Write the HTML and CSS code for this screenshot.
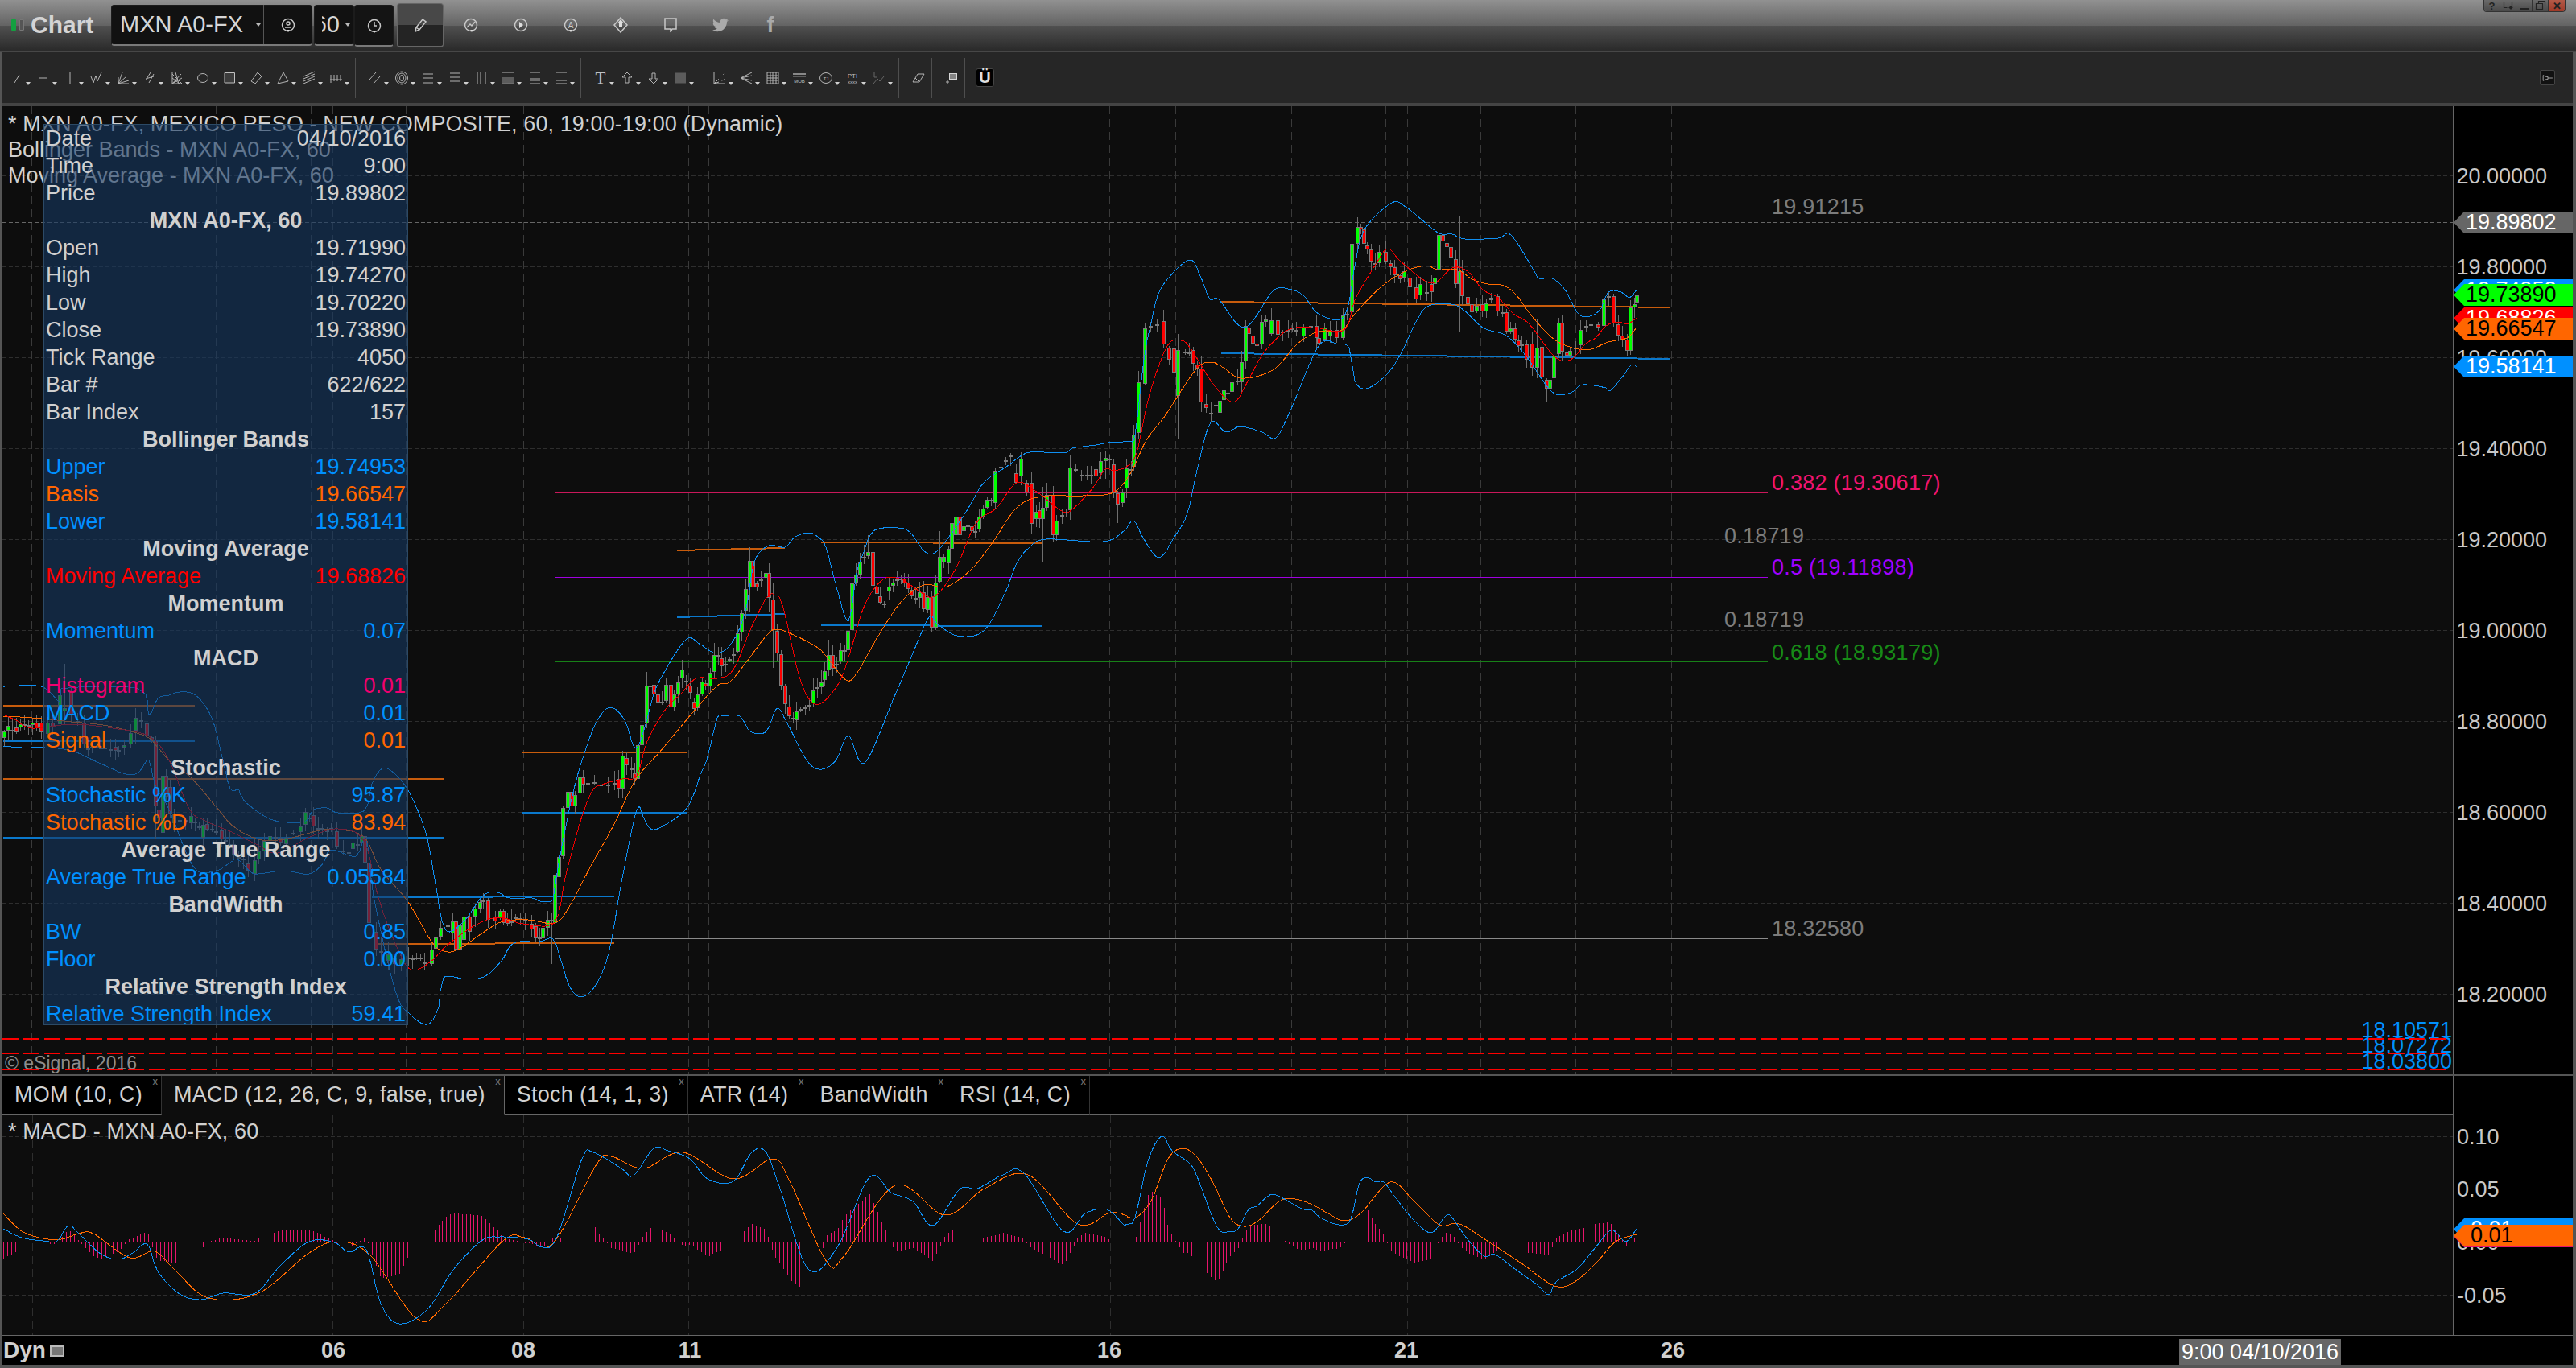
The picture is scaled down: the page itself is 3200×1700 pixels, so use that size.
FILE: index.html
```html
<!DOCTYPE html>
<html lang="en">
<head>
<meta charset="utf-8">
<title>Chart - MXN A0-FX</title>
<link rel="stylesheet" href="styles.css">
</head>
<body>
<div class="app">
  <header class="titlebar">
    <div class="logo"><i class="logo-on"></i><i class="logo-off"></i></div>
    <div class="app-title">Chart</div>
    <div class="box box-symbol">
      <span class="symbol-text">MXN A0-FX</span><i class="caret caret-box"></i>
      <span class="box-icon">
        <svg class="tb-ic" viewBox="0 0 20 20"><circle cx="10" cy="10" r="7.5"/><circle cx="10" cy="8" r="2"/><path d="M6 13h8" /><path class="w" d="M8 16h4l-2 3z"/></svg>
      </span>
    </div>
    <div class="box box-interval"><span class="interval-value">60</span><i class="caret caret-box"></i></div>
    <div class="box box-clock">
      <svg class="tb-ic" viewBox="0 0 20 20"><circle cx="10" cy="10" r="7.5"/><path d="M10 5v5h3"/><path class="w" d="M8 16h4l-2 3z"/></svg>
    </div>
    <div class="box box-pencil">
      <svg class="tb-ic" viewBox="0 0 20 20"><path d="M4 18l1-5L13 3l4 3-8 10z"/><path d="M5 13l4 3"/></svg>
    </div>
    <div class="tb-icons">
      <div class="tb-cell"><svg class="tb-ic" viewBox="0 0 20 20"><circle cx="10" cy="10" r="7.5"/><path d="M5 13l4-4 2 2 4-5"/><path class="w" d="M9 16h4l-2 3z"/></svg></div>
      <div class="tb-cell"><svg class="tb-ic" viewBox="0 0 20 20"><circle cx="10" cy="10" r="7.5"/><path class="w" d="M8 6l5 4-5 4z"/></svg></div>
      <div class="tb-cell"><svg class="tb-ic" viewBox="0 0 20 20"><circle cx="10" cy="10" r="7.5"/><text class="tb-a" x="10" y="14">A</text><path class="w" d="M8 16h4l-2 3z"/></svg></div>
      <div class="tb-cell"><svg class="tb-ic" viewBox="0 0 20 20"><path d="M10 1l8 9-8 9-8-9z"/><path class="w" d="M10 3l4 5h-2v5H8V8H6z"/></svg></div>
      <div class="tb-cell"><svg class="tb-ic" viewBox="0 0 20 20"><path d="M3 2h14v13h-5l-2 4v-4H3z"/></svg></div>
      <div class="tb-cell"><svg class="tb-bird" viewBox="0 0 24 24"><path d="M23.95 4.57a10 10 0 0 1-2.83.8 4.96 4.96 0 0 0 2.16-2.72c-.95.55-2 .95-3.12 1.18a4.92 4.92 0 0 0-8.38 4.48C7.69 8.1 4.07 6.13 1.64 3.16a4.82 4.82 0 0 0-.67 2.48c0 1.71.87 3.21 2.19 4.1a4.9 4.9 0 0 1-2.23-.62v.06a4.93 4.93 0 0 0 3.95 4.83 4.9 4.9 0 0 1-2.21.08 4.94 4.94 0 0 0 4.6 3.42A9.87 9.87 0 0 1 0 19.54a13.9 13.9 0 0 0 7.55 2.21c9.05 0 14-7.5 14-13.98l-.01-.64a10 10 0 0 0 2.41-2.55z"/></svg></div>
      <div class="tb-cell"><span class="tb-f">f</span></div>
    </div>
    <div class="winbtns">
      <span class="winbtn">?</span>
      <span class="winbtn"><svg class="win-ic" viewBox="0 0 14 12"><path d="M1.5 1.5h10v6h-3"/><path d="M1.5 1.5v7h4"/><path class="w" d="M7 8h6l-3 3z"/></svg></span>
      <span class="winbtn"><svg class="win-ic" viewBox="0 0 14 12"><path class="w" d="M2 9h10v2H2z"/></svg></span>
      <span class="winbtn"><svg class="win-ic" viewBox="0 0 14 12"><path d="M4.5 3V.5h8v6H10"/><path d="M1.5 3.5h8v7h-8z"/></svg></span>
      <span class="winbtn winbtn-close">✕</span>
    </div>
  </header>

  <nav class="toolbar">
    <div class="tool"><svg class="ic" viewBox="0 0 16 16"><path d="M5 14l6-10"/></svg><i class="caret"></i></div>
    <div class="tool"><svg class="ic" viewBox="0 0 16 16"><path d="M2 8h11"/></svg><i class="caret"></i></div>
    <div class="tool"><svg class="ic" viewBox="0 0 16 16"><path d="M8 1v14"/></svg><i class="caret"></i></div>
    <div class="tool"><svg class="ic" viewBox="0 0 16 16"><path d="M1 6l3 8 3-9 2 7 5-11"/></svg><i class="caret"></i></div>
    <div class="tool"><svg class="ic" viewBox="0 0 16 16"><path d="M2 15h13M2 15V7M2 15L7 1M2 15L12 6M2 15l13-4"/></svg><i class="caret"></i></div>
    <div class="tool"><svg class="ic" viewBox="0 0 16 16"><path d="M9 1L3 11M13 3L7 14M3 9l10-3"/></svg><i class="caret"></i></div>
    <div class="tool"><svg class="ic" viewBox="0 0 16 16"><path d="M3 1v14h12M3 15L14 3M3 15L15 8M3 3l12 12M3 8l9 7M7 1l4 14"/></svg><i class="caret"></i></div>
    <div class="tool"><svg class="ic" viewBox="0 0 16 16"><ellipse cx="8" cy="8" rx="6.5" ry="5.5"/></svg><i class="caret"></i></div>
    <div class="tool"><svg class="ic" viewBox="0 0 16 16"><path class="grad" d="M2 1.5h12.5V14H2z"/></svg><i class="caret"></i></div>
    <div class="tool"><svg class="ic" viewBox="0 0 16 16"><path d="M2 12L10 1l5 5-8 9z"/></svg><i class="caret"></i></div>
    <div class="tool"><svg class="ic" viewBox="0 0 16 16"><path d="M9 1L2 15l13-3z"/></svg><i class="caret"></i></div>
    <div class="tool"><svg class="ic" viewBox="0 0 16 16"><path d="M1 6l14-6M1 9l14-6M1 12l14-6M1 15l14-6"/></svg><i class="caret"></i></div>
    <div class="tool"><svg class="ic" viewBox="0 0 16 16"><path d="M1 10h15M2 4v10M6 4v8M10 4v8M14 4v8"/></svg><i class="caret"></i></div>
    <i class="sep"></i>
    <div class="tool"><svg class="ic" viewBox="0 0 16 16"><path d="M1 10L9 1M6 15l8-9"/></svg><i class="caret"></i></div>
    <div class="tool"><svg class="ic" viewBox="0 0 16 16"><ellipse cx="8" cy="8" rx="7.5" ry="8"/><ellipse cx="8" cy="8" rx="5" ry="6"/><ellipse cx="8" cy="8" rx="2.5" ry="3.5"/></svg><i class="caret"></i></div>
    <div class="tool"><svg class="ic" viewBox="0 0 16 16"><path d="M2 3h12M2 8h12M2 14h12"/></svg><i class="caret"></i></div>
    <div class="tool"><svg class="ic" viewBox="0 0 16 16"><path d="M2 2h12M2 7h12M2 12h12"/></svg><i class="caret"></i></div>
    <div class="tool"><svg class="ic" viewBox="0 0 16 16"><path d="M3 1v14M7 1v14M13 1v14"/></svg><i class="caret"></i></div>
    <div class="tool"><svg class="ic" viewBox="0 0 16 16"><path d="M1 1h14M1 14h14"/><path class="fill" d="M1 7h14v7H1z"/></svg><i class="caret"></i></div>
    <div class="tool"><svg class="ic" viewBox="0 0 16 16"><path d="M2 1h13M2 9h13M2 11h13M2 15h13"/></svg><i class="caret"></i></div>
    <div class="tool"><svg class="ic" viewBox="0 0 16 16"><path d="M2 1h13M2 11h13M2 15h13"/></svg><i class="caret"></i></div>
    <i class="sep"></i>
    <div class="tool"><span class="ic ic-t">T</span><i class="caret"></i></div>
    <div class="tool"><svg class="ic" viewBox="0 0 16 16"><path d="M8 1L2 7h4v7h4V7h4z"/></svg><i class="caret"></i></div>
    <div class="tool"><svg class="ic" viewBox="0 0 16 16"><path d="M8 15L2 9h4V2h4v7h4z"/></svg><i class="caret"></i></div>
    <div class="tool"><svg class="ic" viewBox="0 0 16 16"><path class="fill" d="M1 1.5h14v13H1z"/></svg><i class="caret"></i></div>
    <i class="sep"></i>
    <div class="tool"><svg class="ic" viewBox="0 0 16 16"><path d="M1 1v14h14M1 15l5-5M1 15l6-2"/><path class="dots" d="M6 10l8-8M8 13l7-4"/></svg><i class="caret"></i></div>
    <div class="tool"><svg class="ic" viewBox="0 0 16 16"><path d="M15 1L1 8l14 7M1 8l14-3M1 8l14 3"/></svg><i class="caret"></i></div>
    <div class="tool"><svg class="ic" viewBox="0 0 16 16"><path d="M1 1h14v14H1zM1 5h14M1 8h14M1 11h14M5 1v14M8 1v14M12 1v14"/></svg><i class="caret"></i></div>
    <div class="tool"><svg class="ic" viewBox="0 0 16 16"><path class="thick" d="M0 3h16"/><path class="fill" d="M0 5h16v2H0z"/><text class="ic-text" x="8" y="14">MOB</text></svg><i class="caret"></i></div>
    <div class="tool"><svg class="ic" viewBox="0 0 16 16"><ellipse cx="8" cy="8" rx="7.5" ry="6.5"/><text class="ic-text" x="8" y="11">TJ</text></svg><i class="caret"></i></div>
    <div class="tool"><svg class="ic" viewBox="0 0 16 16"><text class="ic-text ic-pti" x="8" y="8">PTI</text><text class="ic-text" x="8" y="15">xxxx</text></svg><i class="caret"></i></div>
    <div class="tool"><svg class="ic ic-dim" viewBox="0 0 16 16"><path d="M2 1v6h3"/><path d="M1 15l5-6 3 3 5-6"/></svg><i class="caret"></i></div>
    <i class="sep"></i>
    <div class="tool tool-plain"><svg class="ic" viewBox="0 0 16 16"><path d="M1 13L7 3h8l-6 10zM4 8l5 5"/></svg></div>
    <i class="sep"></i>
    <div class="tool tool-plain"><svg class="ic" viewBox="0 0 16 16"><path class="w" d="M5 2h10v9H5z"/><path class="k" d="M6 4h8M6 6h8M6 8h8"/><path d="M1 13h4M3 11v4"/></svg></div>
    <i class="sep"></i>
    <div class="magnet">Ü</div>
    <div class="pin"><svg class="pin-ic" viewBox="0 0 16 12"><path d="M1 2l4 2h3v4H5l-4 2zM8 6h7"/></svg></div>
  </nav>

  <section class="pane pane-main">
    <div class="plot" id="mainPlot">
      <div class="legend">
        <div class="legend-line legend-first">* MXN A0-FX, MEXICO PESO - NEW COMPOSITE, 60, 19:00-19:00 (Dynamic)</div>
        <div class="legend-line">Bollinger Bands - MXN A0-FX, 60</div>
        <div class="legend-line">Moving Average - MXN A0-FX, 60</div>
      </div>
      <div class="copyright">© eSignal, 2016</div>
      <div class="readout">
        <div class="row"><span>Date</span><span>04/10/2016</span></div>
        <div class="row"><span>Time</span><span>9:00</span></div>
        <div class="row"><span>Price</span><span>19.89802</span></div>
        <div class="row head">MXN A0-FX, 60</div>
        <div class="row"><span>Open</span><span>19.71990</span></div>
        <div class="row"><span>High</span><span>19.74270</span></div>
        <div class="row"><span>Low</span><span>19.70220</span></div>
        <div class="row"><span>Close</span><span>19.73890</span></div>
        <div class="row"><span>Tick Range</span><span>4050</span></div>
        <div class="row"><span>Bar #</span><span>622/622</span></div>
        <div class="row"><span>Bar Index</span><span>157</span></div>
        <div class="row head">Bollinger Bands</div>
        <div class="row c-blue"><span>Upper</span><span>19.74953</span></div>
        <div class="row c-orange"><span>Basis</span><span>19.66547</span></div>
        <div class="row c-blue"><span>Lower</span><span>19.58141</span></div>
        <div class="row head">Moving Average</div>
        <div class="row c-red"><span>Moving Average</span><span>19.68826</span></div>
        <div class="row head">Momentum</div>
        <div class="row c-blue"><span>Momentum</span><span>0.07</span></div>
        <div class="row head">MACD</div>
        <div class="row c-pink"><span>Histogram</span><span>0.01</span></div>
        <div class="row c-blue"><span>MACD</span><span>0.01</span></div>
        <div class="row c-orange"><span>Signal</span><span>0.01</span></div>
        <div class="row head">Stochastic</div>
        <div class="row c-blue"><span>Stochastic %K</span><span>95.87</span></div>
        <div class="row c-orange"><span>Stochastic %D</span><span>83.94</span></div>
        <div class="row head">Average True Range</div>
        <div class="row c-blue"><span>Average True Range</span><span>0.05584</span></div>
        <div class="row head">BandWidth</div>
        <div class="row c-blue"><span>BW</span><span>0.85</span></div>
        <div class="row c-blue"><span>Floor</span><span>0.00</span></div>
        <div class="row head">Relative Strength Index</div>
        <div class="row c-blue"><span>Relative Strength Index</span><span>59.41</span></div>
      </div>
    </div>
    <div class="axis" id="priceAxis"></div>
  </section>

  <section class="tabs-row">
    <div class="tabs">
      <div class="tab">MOM (10, C)<i class="tab-x">x</i></div>
      <div class="tab tab-active">MACD (12, 26, C, 9, false, true)<i class="tab-x">x</i></div>
      <div class="tab">Stoch (14, 1, 3)<i class="tab-x">x</i></div>
      <div class="tab">ATR (14)<i class="tab-x">x</i></div>
      <div class="tab">BandWidth<i class="tab-x">x</i></div>
      <div class="tab">RSI (14, C)<i class="tab-x">x</i></div>
      <div class="tabs-rest"></div>
    </div>
    <div class="axis axis-blank"></div>
  </section>

  <section class="pane pane-macd">
    <div class="plot" id="macdPlot">
      <div class="macd-title">* MACD - MXN A0-FX, 60</div>
    </div>
    <div class="axis" id="macdAxis"></div>
  </section>

  <footer class="timeaxis" id="timeAxis">
    <span class="dyn">Dyn</span><i class="dyn-ic"></i>
    <span class="cursor-time">9:00 04/10/2016</span>
  </footer>
</div>
<script src="chart.js"></script>
</body>
</html>
```

FILE: styles.css
```css
* { box-sizing: border-box; }
html, body { margin: 0; padding: 0; background: #000; }
body { font-family: "Liberation Sans", Arial, sans-serif; overflow: hidden; }
i { font-style: normal; }

.app {
  width: 3200px; height: 1700px;
  display: flex; flex-direction: column;
  background: #555; padding: 0 4px 4px 3px;
}

/* ---------- title bar ---------- */
.titlebar {
  height: 65px; flex: none; margin: 0 -4px 0 -3px;
  display: flex; align-items: center;
  padding: 0 13px 3px 14px;
  background: linear-gradient(#919191 0, #636363 32px, #505050 32px, #2b2b2b 62px, #2b2b2b 63px, #474747 63px);
}
.logo { display: flex; gap: 4px; width: 24px; flex: none; }
.logo i { display: block; width: 6px; height: 14px; border-radius: 1px; }
.logo-on { background: #14a040; }
.logo-off { background: #555; border: 1px solid #777; }
.app-title { font-size: 30px; font-weight: 700; color: #d4d4d4; width: 100px; flex: none; }

.box {
  height: 51px; flex: none; background: #111; border: 1px solid #1c1c1c;
  border-bottom: 2px solid #7a7a7a; border-radius: 4px;
  display: flex; align-items: center; position: relative;
}
.box-symbol { width: 250px; padding-left: 10px; }
.symbol-text { font-size: 29px; color: #d6d6d6; width: 170px; }
.box-icon { margin-left: 3px; width: 60px; height: 49px; border-left: 1px solid #555; display: flex; align-items: center; padding-left: 20px; }
.box-interval { width: 50px; margin-left: 2px; padding-left: 9px; }
.interval-value { display: flex; justify-content: flex-end; width: 22px; overflow: hidden; font-size: 29px; color: #d6d6d6; margin-right: 7px; }
.box-clock { width: 49px; margin-top: 2px; height: 52px; justify-content: center; background: #141414; }
.box-pencil { width: 58px; height: 55px; margin-left: 4px; justify-content: center; background: linear-gradient(#484848 0, #484848 26px, #242424 26px); border-color: #666; }
.tb-ic { width: 20px; height: 20px; fill: none; stroke: #c8c8c8; stroke-width: 1.5; overflow: visible; }
.tb-ic .w { fill: #ddd; stroke: none; }
.tb-a { font-family: "Liberation Sans", Arial, sans-serif; font-size: 10px; text-anchor: middle; fill: #ccc; stroke: none; }
.tb-icons { display: flex; margin-left: 3px; }
.tb-cell { width: 62px; display: flex; justify-content: center; align-items: center; height: 30px; }
.tb-bird { width: 20px; height: 20px; fill: #aaa; }
.tb-f { font-size: 27px; font-weight: 700; color: #aaa; line-height: 27px; }

.winbtns { margin-left: auto; align-self: flex-start; display: flex; height: 15px; border: 1px solid #333; border-top: 0; border-radius: 0 0 4px 4px; overflow: hidden; }
.winbtn { width: 20px; display: flex; align-items: center; justify-content: center; font-size: 13px; font-weight: 700; color: #222; background: linear-gradient(#6a6a6a, #4a4a4a); border-right: 1px solid #333; }
.winbtn-close { background: linear-gradient(#b35a48, #a03a28); border-right: 0; }
.win-ic { width: 14px; height: 12px; fill: none; stroke: #222; stroke-width: 1.2; }
.win-ic .w { fill: #222; stroke: none; }

/* ---------- drawing toolbar ---------- */
.toolbar {
  height: 67px; flex: none; padding: 0 0 0 2px;
  display: flex; align-items: center;
  background: #262626; border-bottom: 4px solid #444;
}
.tool { width: 33px; height: 24px; flex: none; padding-left: 8px; display: flex; gap: 3px; align-items: center; }
.tool-plain { width: 25px; }
.ic { width: 16px; height: 16px; flex: none; display: block; fill: none; stroke: #b4b4b4; stroke-width: 1; overflow: visible; }
.ic-dim { stroke: #666; }
.ic .fill { fill: #5c5c5c; stroke: none; }
.ic .grad { fill: #3c3c3c; stroke: #c0c0c0; }
.ic .thick { stroke: #888; stroke-width: 2; }
.ic .dots { stroke-dasharray: 1 2; }
.ic .w { fill: #d6d6d6; stroke: none; }
.ic .k { stroke: #333; }
.ic-text { font-family: "Liberation Sans", Arial, sans-serif; font-size: 6px; fill: #c0c0c0; stroke: none; text-anchor: middle; }
.ic-pti { font-size: 8px; }
.ic-t { font-family: "Liberation Serif", serif; font-size: 21px; line-height: 16px; color: #c0c0c0; text-align: center; }
.caret { display: block; width: 0; height: 0; flex: none; border: 3px solid transparent; border-top: 4px solid #cfcfcf; border-bottom: 0; align-self: flex-end; margin-bottom: 3px; }
.caret-box { align-self: center; margin: 0; border-top-color: #bbb; }
.sep { display: block; width: 1px; height: 50px; flex: none; background: #4e4e4e; margin: 0 8px 0 7px; }
.magnet { width: 23px; height: 23px; flex: none; margin-left: 5px; background: #000; border: 1px solid #444; border-radius: 3px; color: #e0e0e0; font-size: 20px; font-weight: 700; line-height: 21px; text-align: center; }
.pin { margin-left: auto; margin-right: 22px; width: 19px; height: 19px; flex: none; background: #111; border: 1px solid #444; border-radius: 2px; display: flex; align-items: center; justify-content: center; }
.pin-ic { width: 14px; height: 10px; fill: none; stroke: #bbb; stroke-width: 1; }

/* ---------- chart panes ---------- */
.pane { display: flex; flex: none; background: #000; }
.pane-main { height: 1203px; }
.pane-macd { height: 274px; }
.plot { width: 3044px; flex: none; position: relative; background: #0d0d0d; overflow: hidden; }
.axis { width: 149px; flex: none; position: relative; background: #000; border-left: 1px solid #666; overflow: hidden; }
.axis-blank { height: 100%; }
.chart-svg { position: absolute; left: 0; top: 0; display: block; }
.chart-svg text { font-family: "Liberation Sans", Arial, sans-serif; font-size: 27px; letter-spacing: .25px; }
.chart-svg text.level { letter-spacing: 0; }

.legend { position: absolute; left: 7px; top: 6px; color: #d0d0d0; font-size: 27px; line-height: 32px; white-space: nowrap; }
.legend-line { height: 32px; }
.legend-first { letter-spacing: .1px; }
.copyright { position: absolute; left: 3px; top: 1176px; font-size: 23px; color: #8c8c8c; white-space: nowrap; }

.readout {
  position: absolute; left: 51px; top: 22px; width: 453px; height: 1120px;
  background: rgba(21, 56, 98, .6); border: 1px solid #2c4a66;
  color: #d0d0d0; font-size: 27px; line-height: 34px; padding: 0 2px;
  overflow: hidden;
}
.row { height: 34px; display: flex; justify-content: space-between; white-space: nowrap; }
.row.head { justify-content: center; font-weight: 700; }
.c-blue { color: #0090ff; }
.c-orange { color: #ff6600; }
.c-red { color: #ff0000; }
.c-pink { color: #f0006e; }

.tick { position: absolute; left: 0; width: 116px; text-align: right; font-size: 27px; line-height: 30px; height: 30px; margin-top: -15px; color: #c8c8c8; }
.tick-left { text-align: left; padding-left: 4px; }
.badge { position: absolute; left: 0; width: 149px; height: 27px; font-size: 27px; line-height: 27px; padding-left: 15px; clip-path: polygon(0 50%, 13px 0, 100% 0, 100% 100%, 13px 100%); white-space: nowrap; }
.badge-wide { padding-left: 21px; }
.badge-grey { background: #666; color: #fff; }
.badge-green { background: #00ff00; color: #000; }
.badge-red { background: #ff0000; color: #fff; }
.badge-orange { background: #ff6600; color: #000; }
.badge-blue { background: #0090ff; color: #fff; }
.badge-pink { background: #e6156b; color: #000; }

/* ---------- tabs ---------- */
.tabs-row { height: 48px; flex: none; display: flex; background: #000; margin-top: 2px; }
.tabs { width: 3044px; flex: none; display: flex; }
.tab { position: relative; flex: none; padding: 0 23px 0 15px; font-size: 27px; letter-spacing: .27px; line-height: 46px; color: #d0d0d0; background: #000; border-bottom: 1px solid #666; border-right: 1px solid #333; white-space: nowrap; box-sizing: content-box; height: 47px; }
.tab-active { background: #0d0d0d; border-bottom-color: #0d0d0d; border-right-color: #666; }
.tab-x { position: absolute; right: 4px; top: 0; font-size: 13px; line-height: 14px; color: #777; letter-spacing: 0; }
.tabs-rest { flex: 1; border-bottom: 1px solid #666; height: 48px; }
.macd-title { position: absolute; left: 7px; top: 6px; font-size: 27px; line-height: 30px; color: #d0d0d0; white-space: nowrap; letter-spacing: .1px; }

/* ---------- time axis ---------- */
.timeaxis { position: relative; height: 37px; flex: none; background: #000; border-top: 1px solid #666; }
.dyn { position: absolute; left: 1px; top: 0; font-size: 28px; line-height: 36px; font-weight: 700; color: #d0d0d0; }
.dyn-ic { position: absolute; left: 59px; top: 12px; width: 18px; height: 14px; background: #777; border: 2px solid #bbb; }
.time-label { position: absolute; top: 0; width: 60px; margin-left: -30px; text-align: center; font-size: 27px; line-height: 36px; font-weight: 700; color: #d0d0d0; }
.cursor-time { position: absolute; left: 2704px; top: 4px; width: 201px; height: 32px; background: #666; color: #fff; font-size: 27px; line-height: 32px; text-align: center; white-space: nowrap; }
```

FILE: chart.js
```js
(function () {
  var X = [12,39,130,243,268,386,413,504,623,650,741,855,880,997,1115,1233,1351,1378,1460,1484,1604,1721,1748,1839,1957,2076,2079];
  var XM = [40,413,650,855,1379,1748,2079];

  function yP(p) { return 218 + (20 - p) * 565; }
  function line(x1, y1, x2, y2, c, extra) {
    return '<line x1="' + x1 + '" y1="' + y1 + '" x2="' + x2 + '" y2="' + y2 + '" stroke="' + c + '" ' + (extra || '') + '/>';
  }
  /* traced study lines are passed through a Catmull-Rom spline so they stay smooth */
  function smooth(a) {
    var out = [];
    for (var i = 0; i < a.length - 1; i++) {
      var p0 = a[i - 1] || a[i], p1 = a[i], p2 = a[i + 1], p3 = a[i + 2] || p2;
      var n = Math.max(1, Math.round((p2[0] - p1[0]) / 3));
      for (var k = 0; k < n; k++) {
        var t = k / n, t2 = t * t, t3 = t2 * t;
        out.push([
          0.5 * (2 * p1[0] + (p2[0] - p0[0]) * t + (2 * p0[0] - 5 * p1[0] + 4 * p2[0] - p3[0]) * t2 + (3 * p1[0] - p0[0] - 3 * p2[0] + p3[0]) * t3),
          0.5 * (2 * p1[1] + (p2[1] - p0[1]) * t + (2 * p0[1] - 5 * p1[1] + 4 * p2[1] - p3[1]) * t2 + (3 * p1[1] - p0[1] - 3 * p2[1] + p3[1]) * t3)
        ]);
      }
    }
    out.push(a[a.length - 1]);
    return out;
  }
  function poly(a, c) {
    return '<polyline fill="none" stroke="' + c + '" stroke-width="1" points="' +
      smooth(a).map(function (q) { return q[0].toFixed(1) + ',' + q[1].toFixed(1); }).join(' ') + '"/>';
  }
  function text(x, y, s, c, extra) {
    return '<text x="' + x + '" y="' + y + '" fill="' + c + '" ' + (extra || '') + '>' + s + '</text>';
  }
  var seed = 7;
  function rnd() { seed = (seed * 1103515245 + 12345) & 0x7fffffff; return seed / 0x7fffffff; }

  /* x, top of body, bottom of body, 1 = up (green) / 0 = down (red), optional wick top, wick bottom */
  var bars = [
    [5,909,917,1],[10,902,908,1],[20,904,910,0],[25,900,904,1],[40,898,901,1],[45,898,904,0],[51,898,910,0],[59,898,912,1],[65,898,904,0],[74,864,900,1,840,915],[80,880,884,1,825,900],[88,860,888,0],[96,896,896,0],[104,898,925,0],[130,929,929,0],[143,928,933,0],[147,932,934,1],[154,926,929,1],[162,911,925,1],[168,892,908,1,880,925],[175,895,895,0,885,905],[182,899,915,0],[188,916,918,0],[193,921,1002,0,915,1043],[197,1006,1017,0],[202,964,1035,1,945,1040],[206,964,990,0],[211,978,1011,0],[216,1011,1023,0],[223,1019,1019,0],[230,1019,1019,0],[237,1014,1023,1],[252,1025,1041,1],[257,1024,1031,0],[268,1033,1033,0],[275,1032,1043,0],[290,1049,1062,0],[308,1073,1082,0],[316,1069,1086,1,1040,1095],[321,1058,1068,1],[328,1045,1058,1],[335,1039,1045,1],[348,1041,1047,0],[355,1041,1049,1],[364,1035,1035,0],[373,1027,1034,1],[379,1009,1025,1],[389,1013,1027,0],[400,1029,1029,0],[411,1029,1029,0],[418,1033,1052,0],[426,1057,1057,0],[433,1059,1059,0],[438,1047,1055,1],[449,1039,1047,1],[453,1039,1072,0],[458,1072,1147,0],[467,1158,1180,0],[473,1182,1182,0,1165,1200],[482,1186,1194,1,1170,1205],[490,1191,1198,0],[498,1192,1200,1],[507,1190,1190,0],[517,1190,1190,0],[527,1196,1196,0],[536,1180,1198,1],[541,1165,1179,1],[547,1153,1164,1],[556,1150,1150,0],[562,1145,1160,1],[566,1145,1180,0,1125,1195],[571,1150,1180,1],[576,1139,1168,1,1115,1175],[583,1139,1158,0],[590,1129,1139,1],[596,1121,1129,1],[600,1119,1119,0,1110,1130],[606,1119,1143,0],[615,1140,1145,0],[621,1132,1140,1],[625,1132,1147,0],[630,1142,1148,0],[640,1140,1140,0],[652,1143,1143,0],[660,1148,1155,0],[665,1151,1166,0],[670,1165,1165,0],[674,1153,1166,1],[680,1143,1153,1],[685,1143,1143,0,1135,1198],
    [689,1087,1147,1,1070,1147],[694,1065,1090,1,1040,1095],[699,1004,1064,1],[705,984,1004,1,960,1010],[710,984,1002,0],[714,988,1002,1],[720,966,986,1,950,990],[724,966,975,0],[730,973,973,0],[738,972,972,0],[746,975,975,0],[755,975,975,0],[763,973,973,0],[768,968,980,0],[773,939,980,1],[778,942,951,0],[784,955,955,0],[788,961,968,0],[792,926,968,1],[797,901,926,1],[803,852,899,1,835,905],[807,852,852,0,840,900],[812,851,863,0],[817,863,873,0],[822,872,874,0],[827,851,871,1],[833,851,879,0],[837,863,879,1],[842,848,863,1],[847,832,843,1],[857,852,861,0],[862,872,881,0],[866,863,880,1],[872,847,863,1],[876,849,853,0],[882,836,853,1],[887,814,835,1],[892,814,814,0],[896,818,828,0],[901,825,825,0],[906,819,819,0],[911,813,813,0],[916,787,810,1],[921,762,786,1],[926,732,759,1],[931,697,730,1,680,760],[935,697,730,0],[940,725,730,0],[945,720,720,0],[951,712,718,1,700,760],[955,712,743,0,700,760],[960,745,783,0,725,830],[965,784,812,0],[970,813,852,0],[975,852,875,0],[980,878,890,0],[985,892,892,0],[989,884,895,1],[994,881,881,0],[1000,879,879,0],[1005,876,876,0],[1010,858,874,1],[1015,854,854,0],[1020,848,854,1],[1024,834,845,1],[1029,814,833,1,795,840],[1034,814,831,0],[1039,825,825,0],[1044,808,822,1],[1049,808,808,0],[1053,784,808,1],[1058,725,783,1],[1063,714,724,1,700,728],[1068,698,714,1],[1073,692,692,0],[1078,686,691,1,665,695],[1084,686,728,0],[1089,729,738,0],[1093,741,749,0],[1098,750,750,0],[1104,729,735,1],[1109,724,728,1],[1114,720,720,0],[1119,719,719,0],[1123,719,725,0],[1128,724,732,0],[1132,733,741,0],[1137,743,743,0],[1142,736,743,1],[1147,736,757,0],[1152,742,758,1],[1157,742,780,0],[1162,724,780,1],[1167,692,723,1,660,725],[1172,692,699,1],[1178,682,700,1],[1182,650,682,1,627,690],[1187,642,665,1],[1192,642,665,0],[1197,654,660,1],[1202,653,653,0],[1207,654,660,0],[1211,660,660,0],[1216,642,658,1],[1221,632,642,1],[1226,621,631,1],[1231,621,621,0],[1236,585,625,1],[1243,580,580,0],[1249,572,572,0],[1255,566,566,0],[1262,588,600,0],[1268,570,592,1],[1275,600,612,0],
    [1281,600,651,0],[1287,636,645,1],[1291,634,645,0],[1295,631,645,1,605,698],[1300,615,631,1,600,635],[1308,615,665,0],[1312,647,665,1,640,672],[1319,640,640,0],[1324,636,636,0],[1329,581,634,1],[1336,583,583,0],[1343,590,590,0],[1350,590,590,0],[1355,590,590,0],[1361,583,592,0],[1367,573,588,1],[1373,569,573,1,560,595],[1378,570,570,0],[1383,577,613,0],[1388,613,627,0,610,650],[1394,612,625,1],[1399,582,607,1],[1405,583,583,0],[1408,540,580,1],[1414,475,538,1],[1422,408,477,1],[1429,405,405,0],[1437,403,403,0],[1445,399,428,0],[1452,432,447,0],[1458,433,463,0],[1463,435,492,1,415,545],[1472,437,437,0],[1482,435,452,0],[1487,453,458,0],[1492,458,500,0],[1498,502,507,0],[1504,513,513,0,500,525],[1515,498,513,1],[1520,485,497,1],[1530,475,487,1],[1537,473,473,0],[1542,450,475,1],[1547,405,449,1],[1551,407,415,0],[1556,417,427,0],[1561,427,430,0],[1567,400,428,1],[1572,397,400,1],[1579,398,415,1],[1587,398,416,0],[1593,412,412,0],[1600,410,410,0],[1610,410,410,0],[1619,407,418,1],[1628,405,405,0],[1635,405,420,0],[1638,420,427,0],[1645,407,422,1],[1652,410,418,1],[1660,410,420,0],[1668,392,420,1],[1673,390,390,0],[1679,303,388,1],[1686,282,303,1],[1690,282,285,0],[1694,285,303,0],[1698,305,310,0],[1703,310,325,0],[1708,327,327,0],[1713,313,327,1],[1721,313,325,0],[1727,327,332,0],[1732,332,342,0],[1739,342,347,0],[1744,337,345,1],[1751,345,357,0],[1759,357,372,0],[1764,353,367,1],[1772,363,363,0],[1778,353,363,0],[1782,345,353,1],[1787,292,335,1,268,375],[1792,292,300,0],[1797,302,307,0],[1802,307,320,0],[1808,322,353,0],[1813,337,353,1,268,413],[1816,337,368,0],[1823,369,378,0],[1828,378,388,0],[1834,380,387,1],[1841,378,387,0],[1846,377,387,1],[1852,370,373,1],[1860,368,387,0],[1866,388,388,0],[1871,388,412,0],[1876,408,412,1],[1882,408,422,0],[1886,423,430,0],[1890,428,428,0],[1896,428,447,0],[1903,427,457,0],[1909,432,457,1,397,470],[1915,431,469,0,427,480],[1921,472,483,0,470,499],[1925,472,483,1],[1930,442,470,1],[1936,401,440,1,395,445],[1940,401,437,0],[1946,438,442,0],[1950,436,442,1],[1957,432,432,0],[1963,410,429,1],[1970,405,405,0],[1976,403,403,0],[1985,403,407,0],[1992,372,405,1,362,410],[1998,368,368,0,362,380],[2004,368,402,0],[2010,403,417,0],[2015,417,422,0],[2021,422,436,0,415,442],[2025,382,436,1],[2030,378,382,1,370,395],[2033,367,376,1,362,387]
  ];

  /* fill gaps between traced bars with small dojis */
  var all = [];
  bars.forEach(function (b, i) {
    if (i > 0) {
      var a = bars[i - 1], n = Math.floor((b[0] - a[0]) / 5);
      for (var k = 1; k < n; k++) {
        var t = k / n, xx = Math.round(a[0] + (b[0] - a[0]) * t), yy = Math.round((a[2] + b[1]) / 2 + (rnd() - .5) * 6);
        all.push([xx, yy, yy + 1, k % 2]);
      }
    }
    all.push(b);
  });

  var upper = [[4,853],[51,853],[74,872],[76,856],[172,856],[185,888],[196,868],[210,864],[223,860],[243,864],[263,892],[277,945],[286,980],[297,982],[304,996],[339,1019],[379,1021],[388,1007],[406,1004],[420,1010],[453,1007],[462,974],[475,955],[491,962],[509,986],[529,1035],[540,1092],[553,1155],[576,1145],[600,1113],[618,1109],[633,1116],[661,1116],[671,1120],[687,1118],[691,1091],[699,1046],[710,993],[722,948],[740,899],[758,879],[776,895],[789,930],[801,904],[812,863],[827,832],[853,794],[870,801],[891,812],[911,796],[927,756],[937,698],[955,678],[975,680],[988,667],[1006,662],[1018,669],[1026,680],[1039,729],[1054,772],[1064,712],[1072,689],[1085,660],[1115,656],[1131,662],[1148,685],[1161,687],[1179,667],[1202,633],[1222,600],[1250,580],[1275,563],[1300,562],[1325,562],[1332,557],[1361,553],[1377,550],[1402,548],[1410,540],[1421,447],[1431,397],[1443,357],[1477,323],[1491,343],[1503,372],[1514,372],[1546,407],[1581,362],[1600,359],[1619,367],[1638,390],[1670,393],[1683,330],[1695,285],[1729,252],[1746,257],[1766,273],[1788,290],[1804,291],[1820,297],[1861,296],[1877,292],[1906,337],[1912,346],[1928,346],[1944,360],[1963,392],[1986,387],[1998,363],[2014,363],[2024,370],[2033,360]];
  var lower = [[4,927],[27,929],[56,929],[89,933],[125,949],[156,962],[172,960],[185,944],[192,974],[210,1006],[241,1078],[268,1082],[286,1072],[295,1068],[312,1084],[321,1086],[353,1082],[384,1086],[402,1072],[411,1056],[442,1064],[455,1041],[464,1113],[491,1231],[509,1260],[531,1273],[545,1251],[551,1215],[580,1217],[603,1213],[623,1194],[638,1172],[670,1170],[687,1167],[697,1194],[707,1225],[721,1239],[738,1227],[756,1185],[773,1091],[791,1006],[799,1015],[807,1029],[819,1029],[850,1008],[863,984],[870,962],[878,944],[891,892],[898,890],[919,890],[932,909],[952,909],[965,880],[978,899],[1003,946],[1021,956],[1039,944],[1054,914],[1074,948],[1110,868],[1131,819],[1154,767],[1164,775],[1189,790],[1222,784],[1248,738],[1263,700],[1279,680],[1300,670],[1370,673],[1396,660],[1408,647],[1421,670],[1440,693],[1459,667],[1475,638],[1488,580],[1504,525],[1523,537],[1541,530],[1568,537],[1585,544],[1603,510],[1638,430],[1660,427],[1676,433],[1683,473],[1697,483],[1721,467],[1740,440],[1759,400],[1775,380],[1810,380],[1842,407],[1871,417],[1896,443],[1928,487],[1951,488],[1966,478],[1995,482],[2000,486],[2014,470],[2027,453],[2033,456]];
  var basis = [[4,890],[40,892],[80,896],[134,902],[181,915],[196,929],[214,949],[237,966],[268,1002],[290,1027],[321,1043],[353,1043],[393,1033],[415,1031],[451,1039],[473,1080],[507,1121],[536,1170],[551,1182],[569,1180],[603,1157],[625,1145],[656,1143],[689,1147],[707,1127],[733,1078],[763,1024],[789,970],[819,935],[845,904],[860,886],[891,852],[906,848],[927,823],[952,790],[965,782],[988,790],[1016,805],[1029,819],[1051,845],[1064,837],[1090,792],[1120,747],[1148,727],[1176,729],[1207,707],[1233,674],[1263,631],[1294,617],[1345,616],[1383,612],[1405,587],[1424,547],[1447,517],[1485,460],[1504,450],[1520,457],[1542,470],[1581,460],[1612,427],[1638,412],[1667,410],[1683,390],[1715,357],[1746,337],[1772,330],[1785,335],[1810,335],[1829,347],[1848,353],[1868,355],[1884,367],[1903,393],[1931,422],[1957,433],[1976,434],[1998,425],[2021,420],[2033,407]];
  var ma = [[4,888],[20,895],[40,905],[90,900],[140,905],[185,915],[210,945],[235,1005],[255,1020],[290,1035],[320,1050],[345,1060],[385,1040],[420,1030],[452,1045],[470,1115],[490,1170],[510,1205],[535,1195],[555,1175],[590,1150],[620,1140],[650,1148],[689,1146],[702,1091],[720,1024],[735,984],[748,975],[773,968],[791,964],[804,921],[827,881],[845,863],[865,843],[891,843],[911,832],[932,783],[952,743],[962,739],[972,752],[993,841],[1008,872],[1023,872],[1044,845],[1059,801],[1074,752],[1097,720],[1120,720],[1141,734],[1161,741],[1187,707],[1212,651],[1238,631],[1263,600],[1286,610],[1319,635],[1332,633],[1357,607],[1373,583],[1383,585],[1399,580],[1412,563],[1428,490],[1450,430],[1467,423],[1479,433],[1504,473],[1523,495],[1536,498],[1552,470],[1571,437],[1600,410],[1632,407],[1670,410],[1683,373],[1708,330],[1724,309],[1740,325],[1778,352],[1804,333],[1823,337],[1842,360],[1861,370],[1880,390],[1900,403],[1931,443],[1951,447],[1970,427],[1982,420],[1995,405],[2011,400],[2021,403],[2033,395]];
  var channels = [
    [4,877,242,877,'o'],[4,921,242,921,'b'],[4,968,552,968,'o'],[4,1041,552,1041,'b'],
    [462,1115,763,1114,'b'],[470,1173,763,1172,'o'],[649,935,853,935,'o'],[649,1010,853,1010,'b'],
    [841,684,975,681,'o'],[841,767,975,763,'b'],[1020,674,1295,675,'o'],[1020,777,1295,778,'b'],
    [1517,375,2074,382,'o'],[1517,439,2074,446,'b']
  ];

  var m = '';
  /* grid */
  [20,19.8,19.6,19.4,19.2,19,18.8,18.6,18.4,18.2].forEach(function (p) {
    m += line(3, yP(p), 3047, yP(p), '#2e2e2e', 'stroke-dasharray="5 3"');
  });
  X.forEach(function (x) { m += line(x, 132, x, 1335, '#3a3a3a', 'stroke-dasharray="10 6"'); });
  m += line(2807, 132, 2807, 1335, '#666', 'stroke-dasharray="5 3"');
  m += line(3, 276, 3047, 276, '#666', 'stroke-dasharray="5 3"');

  /* fib lines */
  m += line(689, 268, 2196, 268, '#8a8a8a');
  m += line(689, 612, 2196, 612, '#c8185a');
  m += line(689, 717, 2196, 717, '#a000e0');
  m += line(689, 822, 2196, 822, '#178017');
  m += line(689, 1166, 2196, 1166, '#8a8a8a');
  [[613,653],[680,713],[718,750],[785,820]].forEach(function (s) { m += line(2192, s[0], 2192, s[1], '#777'); });

  /* channels */
  channels.forEach(function (c) {
    m += line(c[0], c[1], c[2], c[3], c[4] === 'o' ? '#c85c0c' : '#0a78cc', 'stroke-width="2"');
  });

  /* candles */
  all.forEach(function (b) {
    var x = b[0], t = b[1], u = b[2], wt = b[4] || t - 2 - Math.round(rnd() * 13), wb = b[5] || u + 2 + Math.round(rnd() * 11);
    m += line(x, wt, x, wb, '#6e6e6e');
    if (u - t < 2) {
      m += '<rect x="' + (x - 2) + '" y="' + t + '" width="5" height="2" fill="#7c7c7c"/>';
    } else {
      m += '<rect x="' + (x - 2) + '" y="' + t + '" width="5" height="' + (u - t) + '" fill="#7c7c7c"/>';
      m += '<rect x="' + (x - 1) + '" y="' + (t + 1) + '" width="3" height="' + (u - t - 2) + '" fill="' + (b[3] ? '#00ff00' : '#ff0000') + '"/>';
    }
  });

  /* studies */
  m += poly(upper, '#0f8ef0') + poly(lower, '#0f8ef0') + poly(basis, '#ff6a00') + poly(ma, '#f00000');

  /* red S/R levels + labels */
  var lvl = 'class="level" text-anchor="end"';
  m += text(3046, 1289, '18.10571', '#0090ff', lvl) + text(3046, 1308, '18.07272', '#0090ff', lvl) + text(3046, 1328, '18.03800', '#0090ff', lvl);
  [1291, 1309, 1329].forEach(function (y) {
    m += line(3, y, 3040, y, '#ff0000', 'stroke-width="2" stroke-dasharray="20 6"');
  });

  /* fib labels */
  m += text(2201, 266, '19.91215', '#7c7c7c');
  m += text(2201, 609, '0.382 (19.30617)', '#f0146e');
  m += text(2142, 675, '0.18719', '#7c7c7c');
  m += text(2201, 714, '0.5 (19.11898)', '#a000ff');
  m += text(2142, 779, '0.18719', '#7c7c7c');
  m += text(2201, 820, '0.618 (18.93179)', '#178a17');
  m += text(2201, 1163, '18.32580', '#7c7c7c');

  document.getElementById('mainPlot').insertAdjacentHTML('afterbegin',
    '<svg class="chart-svg" width="3044" height="1203" viewBox="3 132 3044 1203" shape-rendering="crispEdges">' + m + '</svg>');

  /* ---- price axis ---- */
  var ax = '';
  [20,19.8,19.6,19.4,19.2,19,18.8,18.6,18.4,18.2].forEach(function (p) {
    ax += '<div class="tick" style="top:' + (yP(p) - 131) + 'px">' + p.toFixed(5) + '</div>';
  });
  [[263,'grey','19.89802'],[347,'blue','19.74953'],[353,'green','19.73890'],[382,'red','19.68826'],[395,'orange','19.66547'],[442,'blue','19.58141']].forEach(function (b) {
    ax += '<div class="badge badge-' + b[1] + '" style="top:' + (b[0] - 132) + 'px">' + b[2] + '</div>';
  });
  document.getElementById('priceAxis').innerHTML = ax;

  /* ---- MACD ---- */
  function z7(a) { return a.map(function (v) { return [Math.round(v[0] / 1.12), Math.round(1270 + v[1] / 3)]; }); }
  function z8(a) { return a.map(function (v) { return [Math.round(1400 + v[0] / 1.96), Math.round(1380 + v[1] / 3)]; }); }
  var mb = z7([[4,770],[30,803],[60,815],[80,815],[95,758],[110,790],[140,865],[165,885],[185,860],[205,828],[220,930],[250,1015],[280,1035],[310,1012],[355,1012],[390,910],[430,820],[465,822],[485,858],[510,850],[530,1050],[555,1125],[595,1070],[630,925],[670,815],[695,802],[735,810],[755,840],[775,800],[810,510],[825,487],[865,545],[882,572],[910,472],[930,480],[960,510],[985,585],[1020,595],[1045,490],[1065,482],[1085,620],[1125,920],[1165,840],[1210,578],[1240,635],[1270,670],[1298,758],[1335,625],[1360,620],[1395,570],[1425,565],[1480,780],[1510,715],[1540,700],[1565,760]])
    .concat(z8([[0,422],[20,400],[50,190],[85,97],[110,150],[150,195],[170,245],[220,435],[250,450],[270,440],[295,370],[315,358],[340,325],[362,315],[425,365],[450,372],[470,400],[515,427],[545,405],[565,275],[585,250],[605,268],[625,268],[660,340],[700,410],[740,455],[775,395],[790,395],[830,480],[870,542],[895,538],[945,590],[1000,650],[1028,687],[1045,640],[1095,590],[1140,510],[1175,450],[1190,452],[1215,490],[1240,440]]));
  var ms = z7([[4,715],[30,780],[60,808],[85,810],[110,790],[130,790],[180,878],[215,855],[245,930],[290,1028],[360,1012],[430,860],[470,820],[515,870],[580,1108],[620,1050],[700,815],[730,805],[770,825],[830,530],[850,502],[895,545],[950,487],[1020,585],[1075,510],[1100,600],[1150,895],[1175,870],[1245,610],[1315,720],[1370,620],[1430,570],[1500,752],[1545,710],[1568,722]])
    .concat(z8([[0,397],[25,397],[60,330],[100,180],[135,140],[170,175],[210,270],[250,400],[285,433],[320,410],[370,340],[410,330],[450,350],[490,385],[530,410],[570,380],[640,268],[700,340],[760,425],[810,422],[880,490],[960,570],[1040,655],[1090,640],[1145,565],[1190,490],[1240,463]]));
  function at(a, x) {
    for (var i = 1; i < a.length; i++) {
      if (x <= a[i][0]) {
        var t = (x - a[i - 1][0]) / ((a[i][0] - a[i - 1][0]) || 1);
        return a[i - 1][1] + (a[i][1] - a[i - 1][1]) * t;
      }
    }
    return a[a.length - 1][1];
  }
  var d = '', ZERO = 1543;
  [1412, 1477, 1609].forEach(function (y) { d += line(3, y, 3047, y, '#2e2e2e', 'stroke-dasharray="5 3"'); });
  XM.forEach(function (x) { d += line(x, 1385, x, 1659, '#2e2e2e', 'stroke-dasharray="10 6"'); });
  d += line(2807, 1385, 2807, 1659, '#555', 'stroke-dasharray="5 3"');
  for (var x = 4; x <= 2032; x += 4.87) {
    var h = Math.round((at(ms, x) - at(mb, x)) * 1.1), px = Math.round(x);
    if (Math.abs(h) >= 1) d += line(px, ZERO, px, ZERO - h, '#e6156b');
  }
  d += line(3, ZERO, 3047, ZERO, '#707070', 'stroke-dasharray="5 3"');
  d += poly(ms, '#ff6a00') + poly(mb, '#0f8ef0');
  document.getElementById('macdPlot').insertAdjacentHTML('afterbegin',
    '<svg class="chart-svg" width="3044" height="274" viewBox="3 1385 3044 274" shape-rendering="crispEdges">' + d + '</svg>');

  var mx = '';
  [[1412,'0.10'],[1477,'0.05'],[1543,'0.00'],[1609,'-0.05']].forEach(function (t) {
    mx += '<div class="tick tick-left" style="top:' + (t[0] - 1384) + 'px">' + t[1] + '</div>';
  });
  mx += '<div class="badge badge-wide badge-blue" style="top:' + (1514 - 1385) + 'px">0.01</div>';
  mx += '<div class="badge badge-wide badge-pink" style="top:' + (1523 - 1385) + 'px">0.01</div>';
  mx += '<div class="badge badge-wide badge-orange" style="top:' + (1522 - 1385) + 'px">0.01</div>';
  document.getElementById('macdAxis').innerHTML = mx;

  /* ---- time axis ---- */
  var tx = '';
  [[414,'06'],[650,'08'],[857,'11'],[1378,'16'],[1747,'21'],[2078,'26']].forEach(function (t) {
    tx += '<span class="time-label" style="left:' + (t[0] - 3) + 'px">' + t[1] + '</span>';
  });
  document.getElementById('timeAxis').insertAdjacentHTML('beforeend', tx);
})();
```
